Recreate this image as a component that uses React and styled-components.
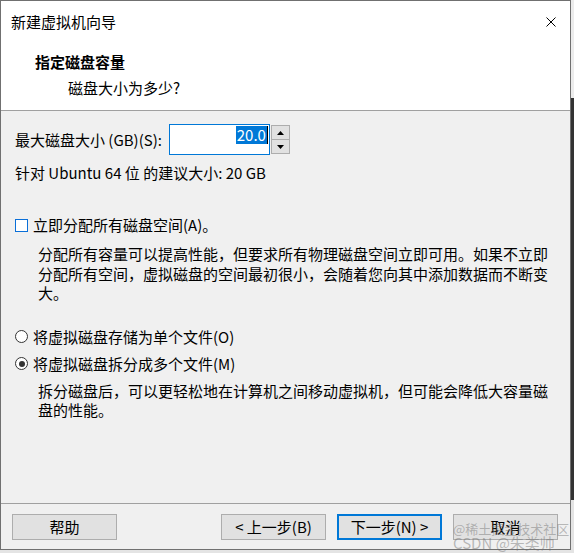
import React from "react";
import styled, { createGlobalStyle } from "styled-components";

const Global = createGlobalStyle`
  html, body { margin: 0; padding: 0; }
  body {
    width: 574px;
    height: 553px;
    overflow: hidden;
    background: linear-gradient(to bottom, #ececec 0, #ececec 98px, #333333 98px, #333333 500px, #e4e4e4 500px);
    font-family: "Noto Sans CJK SC", "Noto Sans", sans-serif;
    font-size: 15px;
    color: #000;
  }
`;

const Win = styled.div`
  position: relative;
  box-sizing: border-box;
  width: 571px;
  height: 550px;
  border: 1px solid #707070;
  background: #f0f0f0;
  display: flex;
  flex-direction: column;
`;

const TitleBar = styled.div`
  height: 41px;
  background: #fff;
  display: flex;
  align-items: center;
  justify-content: space-between;
  padding: 1px 14px 0 10px;
  box-sizing: border-box;
  line-height: 20px;
`;

const Close = styled.div`
  width: 10px;
  height: 10px;
  display: flex;
`;

const Header = styled.div`
  box-sizing: border-box;
  height: 69px;
  background: #fff;
  border-bottom: 1px solid #a0a0a0;
  padding: 10px 0 0 34px;
`;

const HeadTitle = styled.div`
  font-weight: 700;
  line-height: 20px;
`;

const HeadSub = styled.div`
  margin-top: 6px;
  padding-left: 33px;
  line-height: 20px;
`;

const Body = styled.div`
  flex: 1;
  padding: 13px 0 0 14px;
  display: flex;
  flex-direction: column;
`;

const SizeRow = styled.div`
  display: flex;
  align-items: center;
  height: 31px;
`;

const Label = styled.div`
  line-height: 20px;
  margin-right: 7px;
`;

const NumBox = styled.div`
  box-sizing: border-box;
  width: 101px;
  height: 31px;
  border: 1px solid #0078d7;
  background: #fff;
  display: flex;
  justify-content: flex-end;
  align-items: flex-start;
  padding: 1px 1px 0 0;
`;

const Selected = styled.span`
  background: #0078d7;
  color: #fff;
  line-height: 18px;
  padding: 0 1px;
  border-right: 1px solid #000;
`;

const Spinner = styled.div`
  margin-left: 1px;
  width: 19px;
  height: 29px;
  display: flex;
  flex-direction: column;
`;

const SpinBtn = styled.div`
  box-sizing: border-box;
  flex: 1;
  background: #e1e1e1;
  border: 1px solid #adadad;
  margin-top: ${(p) => (p.$down ? "-1px" : "0")};
  display: flex;
  align-items: center;
  justify-content: center;
`;

const Line = styled.div`
  line-height: 20px;
  margin-top: ${(p) => p.$mt || 0}px;
`;

const OptionRow = styled.label`
  display: flex;
  align-items: center;
  line-height: 20px;
  margin-top: ${(p) => p.$mt || 0}px;
`;

const CheckBox = styled.span`
  box-sizing: border-box;
  width: 13px;
  height: 13px;
  border: 1px solid #0a6fd8;
  background: #fff;
  margin-right: 5px;
`;

const Radio = styled.span`
  box-sizing: border-box;
  width: 13px;
  height: 13px;
  border-radius: 50%;
  border: 1px solid #333;
  background: #fff;
  margin-right: 5px;
  display: flex;
  align-items: center;
  justify-content: center;
  &::after {
    content: "";
    width: 6px;
    height: 6px;
    border-radius: 50%;
    background: ${(p) => (p.$checked ? "#333" : "transparent")};
  }
`;

const Para = styled.p`
  margin: ${(p) => p.$mt || 0}px 0 0 23px;
  width: 512px;
  line-height: 19.5px;
`;

const Footer = styled.div`
  box-sizing: border-box;
  height: 46px;
  border-top: 1px solid #a0a0a0;
  padding: 10px 12px 0 11px;
  display: flex;
  align-items: flex-start;
`;

const Spacer = styled.div`
  flex: 1;
`;

const Buttons = styled.div`
  display: flex;
  gap: 11px;
`;

const Button = styled.button`
  box-sizing: border-box;
  width: 105px;
  height: 26px;
  padding: 0;
  background: #e1e1e1;
  border: ${(p) => (p.$default ? "2px solid #0078d7" : "1px solid #adadad")};
  font-family: inherit;
  font-size: 15px;
  line-height: 20px;
  color: #000;
`;

const Watermark = styled.div`
  position: absolute;
  left: 452px;
  top: ${(p) => p.$top}px;
  font-size: ${(p) => p.$size}px;
  line-height: ${(p) => p.$size}px;
  color: rgba(110, 110, 110, 0.45);
  white-space: nowrap;
  pointer-events: none;
`;

const Arrow = ({ down }) => (
  <svg width="7" height="4" viewBox="0 0 7 4">
    <path d={down ? "M0 0 H7 L3.5 4 Z" : "M0 4 H7 L3.5 0 Z"} fill="#000" />
  </svg>
);

export default function App() {
  return (
    <>
      <Global />
      <Win>
        <TitleBar>
          <span>新建虚拟机向导</span>
          <Close>
            <svg width="10" height="10" viewBox="0 0 10 10">
              <path d="M0.5 0.5 L9.5 9.5 M9.5 0.5 L0.5 9.5" stroke="#000" strokeWidth="1" />
            </svg>
          </Close>
        </TitleBar>
        <Header>
          <HeadTitle>指定磁盘容量</HeadTitle>
          <HeadSub>磁盘大小为多少?</HeadSub>
        </Header>
        <Body>
          <SizeRow>
            <Label>最大磁盘大小 (GB)(S):</Label>
            <NumBox>
              <Selected>20.0</Selected>
            </NumBox>
            <Spinner>
              <SpinBtn>
                <Arrow />
              </SpinBtn>
              <SpinBtn $down>
                <Arrow down />
              </SpinBtn>
            </Spinner>
          </SizeRow>
          <Line $mt={8}>针对 Ubuntu 64 位 的建议大小: 20 GB</Line>
          <OptionRow $mt={32}>
            <CheckBox />
            立即分配所有磁盘空间(A)。
          </OptionRow>
          <Para $mt={9}>
            分配所有容量可以提高性能，但要求所有物理磁盘空间立即可用。如果不立即分配所有空间，虚拟磁盘的空间最初很小，会随着您向其中添加数据而不断变大。
          </Para>
          <OptionRow $mt={24}>
            <Radio />
            将虚拟磁盘存储为单个文件(O)
          </OptionRow>
          <OptionRow $mt={7}>
            <Radio $checked />
            将虚拟磁盘拆分成多个文件(M)
          </OptionRow>
          <Para $mt={7}>
            拆分磁盘后，可以更轻松地在计算机之间移动虚拟机，但可能会降低大容量磁盘的性能。
          </Para>
        </Body>
        <Footer>
          <Button>帮助</Button>
          <Spacer />
          <Buttons>
            <Button>&lt; 上一步(B)</Button>
            <Button $default>下一步(N) &gt;</Button>
            <Button>取消</Button>
          </Buttons>
        </Footer>
        <Watermark $top={521} $size={13}>@稀土掘金技术社区</Watermark>
        <Watermark $top={534} $size={15}>CSDN @朱类帅</Watermark>
      </Win>
    </>
  );
}
